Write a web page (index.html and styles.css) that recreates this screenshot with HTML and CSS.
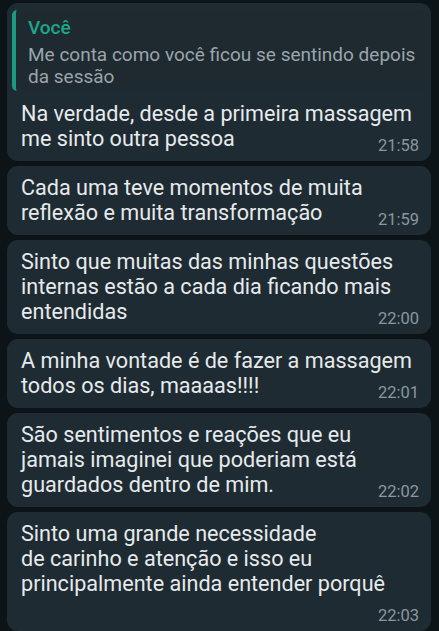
FILE: index.html
```html
<!DOCTYPE html>
<html lang="pt-BR">
<head>
<meta charset="utf-8">
<title>Chat</title>
<link rel="stylesheet" href="styles.css">
</head>
<body>
<div class="chat">
  <div class="bubble">
    <div class="quote">
      <div class="quote-name">Você</div>
      <div class="quote-text">Me conta como você ficou se sentindo depois<br>da sessão</div>
    </div>
    <p class="msg msg-after-quote">Na verdade, desde a primeira massagem<br>me sinto outra pessoa <span class="time">21:58</span></p>
  </div>
  <div class="bubble">
    <p class="msg">Cada uma teve momentos de muita<br>reflexão e muita transformação <span class="time">21:59</span></p>
  </div>
  <div class="bubble">
    <p class="msg">Sinto que muitas das minhas questões<br>internas estão a cada dia ficando mais<br>entendidas <span class="time">22:00</span></p>
  </div>
  <div class="bubble">
    <p class="msg">A minha vontade é de fazer a massagem<br>todos os dias, maaaas!!!! <span class="time">22:01</span></p>
  </div>
  <div class="bubble">
    <p class="msg">São sentimentos e reações que eu<br>jamais imaginei que poderiam está<br>guardados dentro de mim. <span class="time">22:02</span></p>
  </div>
  <div class="bubble">
    <p class="msg">Sinto uma grande necessidade<br>de carinho e atenção e isso eu<br>principalmente ainda entender porquê <span class="time">22:03</span></p>
  </div>
</div>
</body>
</html>
```

FILE: styles.css
```css
html, body {
  margin: 0;
  padding: 0;
}

body {
  background: #0c1418;
  width: 439px;
  height: 631px;
  overflow: hidden;
  font-family: Roboto, "Noto Sans", sans-serif;
}

.chat {
  display: flex;
  flex-direction: column;
  gap: 5px;
  padding: 3px 8px 0 7px;
}

.bubble {
  background: #1f2b32;
  border-radius: 11px;
  padding: 9px 12px 5px 14px;
}

.bubble:first-child {
  padding-top: 7px;
}

.quote {
  margin: 0 -7px 0 -9px;
  border-left: 4px solid #1b9a80;
  border-radius: 5px;
  background: #1e2a30;
  padding: 7px 4px 2px 12px;
}

.quote-name {
  color: #1fa68b;
  font-size: 19px;
  font-weight: 500;
  line-height: 22px;
  margin-bottom: 5px;
}

.quote-text {
  color: #9ba5ab;
  font-size: 19px;
  line-height: 22.4px;
}

.msg {
  display: flow-root;
  margin: 0;
  color: #e6eaec;
  font-size: 21.6px;
  line-height: 25px;
}

.msg-after-quote {
  margin-top: 10px;
}

.time {
  float: right;
  margin: 10px 0 0 8px;
  color: #8a979e;
  font-size: 16.5px;
  line-height: 20px;
}
```
